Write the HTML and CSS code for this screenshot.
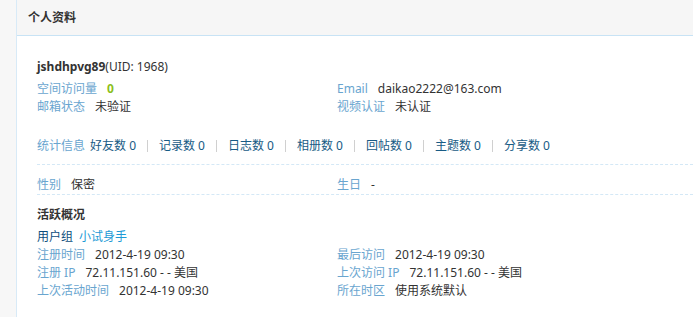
FILE: index.html
```html
<!DOCTYPE html>
<html lang="zh-CN">
<head>
    <meta charset="UTF-8">
    <title>个人资料</title>
    <link rel="stylesheet" href="styles.css">
</head>
<body>
    <div class="page">
        <div class="side"></div>
        <div class="main">
            <div class="hd">
                <h1>个人资料</h1>
            </div>
            <div class="bd">
                <h2 class="uname"><b>jshdhpvg89</b>(UID: 1968)</h2>
                <ul class="pf">
                    <li><em>空间访问量</em><strong class="num">0</strong></li>
                    <li><em>Email</em>daikao2222@163.com</li>
                    <li><em>邮箱状态</em>未验证</li>
                    <li><em>视频认证</em>未认证</li>
                </ul>

                <!-- stats links -->
                <div class="section stats">
                    <em>统计信息</em>
                    <a href="#">好友数 0</a><span class="sep"></span>
                    <a href="#">记录数 0</a><span class="sep"></span>
                    <a href="#">日志数 0</a><span class="sep"></span>
                    <a href="#">相册数 0</a><span class="sep"></span>
                    <a href="#">回帖数 0</a><span class="sep"></span>
                    <a href="#">主题数 0</a><span class="sep"></span>
                    <a href="#">分享数 0</a>
                </div>

                <ul class="pf section">
                    <li><em>性别</em>保密</li>
                    <li><em>生日</em>-</li>
                </ul>

                <h3 class="sub">活跃概况</h3>
                <div class="group"><span class="group-label">用户组</span><a href="#" class="group-name">小试身手</a></div>
                <ul class="pf">
                    <li><em>注册时间</em>2012-4-19 09:30</li>
                    <li><em>最后访问</em>2012-4-19 09:30</li>
                    <li><em>注册 IP</em>72.11.151.60 - - 美国</li>
                    <li><em>上次访问 IP</em>72.11.151.60 - - 美国</li>
                    <li><em>上次活动时间</em>2012-4-19 09:30</li>
                    <li><em>所在时区</em>使用系统默认</li>
                </ul>
            </div>
        </div>
    </div>
</body>
</html>
```

FILE: styles.css
```css
html, body {
    height: 100%;
}
body {
    margin: 0;
    padding: 0;
    font-family: "Noto Sans", "Noto Sans CJK SC", sans-serif;
    font-size: 12px;
    color: #333;
    background-color: #f7f7f7;
}
.page {
    display: flex;
    height: 100%;
}
.side {
    width: 16px;
    flex-shrink: 0;
}
.main {
    flex: 1;
    background: #fff;
    border-left: 1px solid #d8eaf7;
    overflow: hidden;
}
.hd {
    height: 35px;
    background-color: #f6f6f6;
    border-bottom: 1px solid #c8e3f5;
}
.hd h1 {
    margin: 0;
    padding-left: 11px;
    font-size: 12px;
    line-height: 35px;
    font-weight: bold;
    color: #333;
}
.bd {
    padding: 22px 0 0 20px;
    line-height: 18px;
}
.uname {
    margin: 0 0 4px;
    font-size: 12px;
    font-weight: normal;
    line-height: 18px;
}
.uname b {
    font-weight: bold;
}
ul.pf {
    list-style: none;
    margin: 0;
    padding: 0;
    display: grid;
    grid-template-columns: 300px 1fr;
}
em {
    font-style: normal;
    color: #69a5cf;
    margin-right: 10px;
}
.num {
    color: #8cbf1a;
    font-weight: bold;
}
a {
    color: #185b85;
    text-decoration: none;
}
.section {
    padding-bottom: 9px;
    border-bottom: 1px dashed #d4e8f6;
}
.stats {
    display: flex;
    align-items: center;
    margin-top: 21px;
}
.stats em {
    margin-right: 5px;
}
.stats .sep {
    display: inline-block;
    width: 0;
    height: 12px;
    border-left: 1px solid #d0d0d0;
    margin: 0 11px;
}
ul.pf.section {
    padding-top: 11px;
}
.sub {
    margin: 11px 0 4px;
    font-size: 12px;
    font-weight: bold;
    line-height: 18px;
    color: #333;
}
.group .group-label {
    color: #0d4d7c;
    margin-right: 6px;
}
.group .group-name {
    color: #1d9ad6;
}
```
